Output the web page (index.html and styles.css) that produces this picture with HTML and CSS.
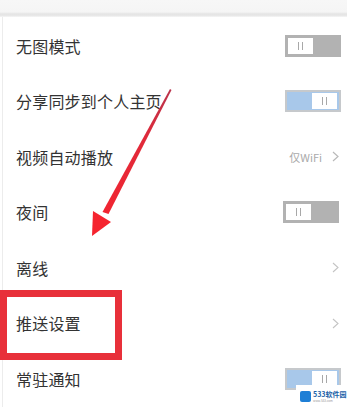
FILE: index.html
```html
<!DOCTYPE html>
<html lang="zh">
<head>
<meta charset="utf-8">
<link rel="stylesheet" href="styles.css">
</head>
<body>
<div class="page">
  <div class="topband"></div>
  <div class="list">
    <div class="row"><span class="label">无图模式</span><span class="switch off"><span class="knob"><i></i><i></i></span></span></div>
    <div class="row"><span class="label">分享同步到个人主页</span><span class="switch on"><span class="knob"><i></i><i></i></span></span></div>
    <div class="row"><span class="label">视频自动播放</span><span class="value">仅WiFi<svg class="chev" width="7" height="11" viewBox="0 0 7 11"><polyline points="1,1 6,5.5 1,10" fill="none" stroke="#b9b9b9" stroke-width="1.2"/></svg></span></div>
    <div class="row"><span class="label">夜间</span><span class="switch off night"><span class="knob"><i></i><i></i></span></span></div>
    <div class="row"><span class="label">离线</span><span class="value"><svg class="chev" width="7" height="11" viewBox="0 0 7 11"><polyline points="1,1 6,5.5 1,10" fill="none" stroke="#c4c4c4" stroke-width="1.1"/></svg></span></div>
    <div class="row"><span class="label">推送设置</span><span class="value"><svg class="chev" width="7" height="11" viewBox="0 0 7 11"><polyline points="1,1 6,5.5 1,10" fill="none" stroke="#c4c4c4" stroke-width="1.1"/></svg></span></div>
    <div class="row"><span class="label">常驻通知</span><span class="switch on"><span class="knob"><i></i><i></i></span></span></div>
  </div>

  <div class="highlight"></div>

  <svg class="arrow" width="347" height="414" viewBox="0 0 347 414">
    <defs>
      <linearGradient id="ag" x1="171" y1="88" x2="95" y2="230" gradientUnits="userSpaceOnUse">
        <stop offset="0" stop-color="#b8334c"/>
        <stop offset="0.35" stop-color="#e02a3a"/>
        <stop offset="1" stop-color="#f5242f"/>
      </linearGradient>
    </defs>
    <polygon points="170,89 171.5,90 108.5,214 102.5,212" fill="url(#ag)"/>
    <polygon points="92,236 93,211 111,222" fill="#f5242f"/>
  </svg>

  <div class="watermark">
    <span class="wm-icon"></span>
    <span class="wm-text"><b>533软件园</b><small>www.533.com</small></span>
  </div>
</div>
</body>
</html>
```

FILE: styles.css
```css
* { box-sizing: border-box; }
html, body { margin: 0; padding: 0; }
body {
  background: #ffffff;
  font-family: "Noto Sans CJK SC", "Noto Sans", sans-serif;
  width: 347px;
  height: 414px;
  overflow: hidden;
}
.page {
  position: relative;
  width: 347px;
  height: 414px;
}
.topband {
  height: 17px;
  background: linear-gradient(#f7f7f7 0, #f5f5f5 12px, #e4e4e4 14px, #e9e9e9 16px, #fafafa 17px);
}
.list {
  margin-left: 2px;
  border-left: 1px solid #ececec;
  padding-top: 1px;
}
.row {
  height: 55.5px;
  display: flex;
  align-items: center;
  justify-content: space-between;
  padding-left: 13px;
  padding-right: 6px;
}
.label {
  font-size: 16px;
  color: #333333;
  letter-spacing: 0.2px;
}
.switch {
  width: 56px;
  height: 22px;
  display: flex;
  align-items: center;
  padding: 3px;
}
.switch.off {
  background: #b2b2b2;
  justify-content: flex-start;
}
.switch.night {
  margin-right: 2px;
}
.switch.on {
  background: #a8c8ea;
  border: 2px solid #c6c9cc;
  justify-content: flex-end;
  padding: 2px;
}
.knob {
  width: 25px;
  height: 16px;
  background: #ffffff;
  display: flex;
  align-items: center;
  justify-content: center;
  gap: 3px;
}
.knob i {
  width: 1px;
  height: 8px;
  background: #a8a8a8;
}
.value {
  display: flex;
  align-items: center;
  gap: 10px;
  font-size: 11px;
  color: #aaaaaa;
  padding-right: 2px;
}
.chev { display: block; }
.highlight {
  position: absolute;
  left: 0;
  top: 290px;
  width: 122px;
  height: 70px;
  border: 7px solid #e8303a;
}
.arrow {
  position: absolute;
  left: 0;
  top: 0;
}
.watermark {
  position: absolute;
  left: 296px;
  top: 385px;
  width: 51px;
  height: 29px;
  background: #ffffff;
  display: flex;
  align-items: flex-start;
  gap: 2px;
  padding: 6px 0 0 4px;
}
.wm-icon {
  width: 11px;
  height: 11px;
  background: #1e7fd6;
  border-radius: 2px;
}
.wm-text {
  display: flex;
  flex-direction: column;
  gap: 2px;
}
.wm-text b {
  font-size: 7px;
  line-height: 7px;
  height: 7px;
  color: #1c5fa8;
  font-weight: bold;
}
.wm-text small {
  font-size: 3px;
  line-height: 3px;
  height: 3px;
  color: #999999;
}
```
